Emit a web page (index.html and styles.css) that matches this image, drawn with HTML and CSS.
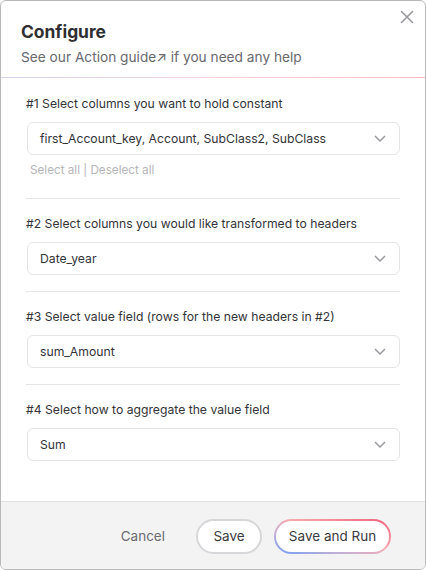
FILE: index.html
```html
<!DOCTYPE html>
<html>
<head>
<meta charset="utf-8">
<link rel="stylesheet" href="styles.css">
</head>
<body>
<div class="dialog">
  <button class="close" aria-label="Close">
    <svg width="14" height="14" viewBox="0 0 14 14"><path d="M1.5 1.5 L12.5 12.5 M12.5 1.5 L1.5 12.5" stroke="#9a9a9e" stroke-width="1.6" fill="none" stroke-linecap="round"/></svg>
  </button>
  <header class="head">
    <h1 class="title">Configure</h1>
    <p class="subtitle">See our <span class="link">Action guide↗</span> if you need any help</p>
  </header>
  <div class="rule"></div>
  <main class="body">
    <section class="field">
      <div class="label">#1 Select columns you want to hold constant</div>
      <div class="select"><span>first_Account_key, Account, SubClass2, SubClass</span><svg class="chev" width="12" height="7" viewBox="0 0 12 7"><path d="M1 1 L6 6 L11 1" stroke="#9a9a9e" stroke-width="1.5" fill="none"/></svg></div>
      <div class="helper">Select all | Deselect all</div>
    </section>
    <section class="field">
      <div class="label">#2 Select columns you would like transformed to headers</div>
      <div class="select"><span>Date_year</span><svg class="chev" width="12" height="7" viewBox="0 0 12 7"><path d="M1 1 L6 6 L11 1" stroke="#9a9a9e" stroke-width="1.5" fill="none"/></svg></div>
    </section>
    <section class="field">
      <div class="label">#3 Select value field (rows for the new headers in #2)</div>
      <div class="select"><span>sum_Amount</span><svg class="chev" width="12" height="7" viewBox="0 0 12 7"><path d="M1 1 L6 6 L11 1" stroke="#9a9a9e" stroke-width="1.5" fill="none"/></svg></div>
    </section>
    <section class="field last">
      <div class="label">#4 Select how to aggregate the value field</div>
      <div class="select"><span>Sum</span><svg class="chev" width="12" height="7" viewBox="0 0 12 7"><path d="M1 1 L6 6 L11 1" stroke="#9a9a9e" stroke-width="1.5" fill="none"/></svg></div>
    </section>
  </main>
  <footer class="foot">
    <button class="btn-text">Cancel</button>
    <button class="btn-pill">Save</button>
    <button class="btn-grad">Save and Run</button>
  </footer>
</div>
</body>
</html>
```
FILE: styles.css
```css
* { box-sizing: border-box; }
html, body { margin: 0; padding: 0; background: #ffffff; }
body { font-family: Inter, "Noto Sans", "Liberation Sans", sans-serif; color: #333338; }

.dialog {
  position: relative;
  width: 426px;
  height: 570px;
  border: 1px solid #b9b9b9;
  border-radius: 6px;
  display: flex;
  flex-direction: column;
  overflow: hidden;
  background: #fff;
}

.close {
  position: absolute;
  top: 9px;
  right: 11px;
  border: 0;
  background: none;
  padding: 0;
  width: 14px;
  height: 14px;
  display: flex;
}

.head { padding: 20px 20px 0 20px; }
.title {
  margin: 0;
  font-size: 17.4px;
  line-height: 22px;
  font-weight: 700;
  color: #2f2f33;
}
.subtitle {
  margin: 5px 0 0;
  font-size: 13.7px;
  line-height: 18px;
  color: #68686e;
}
.rule {
  margin-top: 11px;
  height: 1px;
  background: linear-gradient(to right, #d6d0ec 0%, #f7d7dc 50%, #ffb8c2 100%);
}

.body {
  padding: 16px 25px 0 25px;
  display: flex;
  flex-direction: column;
}
.field {
  padding-bottom: 16px;
  border-bottom: 1px solid #e6e6e8;
  margin-bottom: 15px;
}
.field.last { border-bottom: 0; }
.label {
  font-size: 12.2px;
  line-height: 19px;
  color: #333338;
  margin-bottom: 9px;
}
.select {
  height: 33px;
  margin-left: 1px;
  border: 1px solid #e4e4e6;
  border-radius: 6px;
  display: flex;
  align-items: center;
  justify-content: space-between;
  padding: 0 13px 0 12px;
  font-size: 12.2px;
  color: #333338;
}
.chev { display: block; }
.helper {
  margin-top: 7px;
  margin-left: 4px;
  font-size: 11.7px;
  line-height: 16px;
  color: #b5b5b8;
  margin-bottom: 4px;
}

.foot {
  margin-top: auto;
  height: 68px;
  background: #f3f3f4;
  border-top: 1px solid #e0e0e2;
  display: flex;
  align-items: center;
  justify-content: flex-end;
  padding: 1px 34px 0 0;
}
.foot button { font-family: inherit; font-size: 13.5px; color: #3a3a40; cursor: pointer; }
.btn-text {
  border: 0;
  background: none;
  color: #6b6b72 !important;
  margin-right: 31px;
  padding: 0;
}
.btn-pill {
  height: 35px;
  width: 66px;
  border-radius: 18px;
  border: 2px solid #d7d7da;
  background: #fff;
  margin-right: 12px;
  padding: 0;
}
.btn-grad {
  height: 35px;
  width: 117px;
  border-radius: 18px;
  border: 2px solid transparent;
  background:
    linear-gradient(#fff, #fff) padding-box,
    linear-gradient(to top right, #6f9cf5 0%, #c3b0d6 30%, #f7aab2 55%, #f0607f 100%) border-box;
  padding: 0;
}
```
